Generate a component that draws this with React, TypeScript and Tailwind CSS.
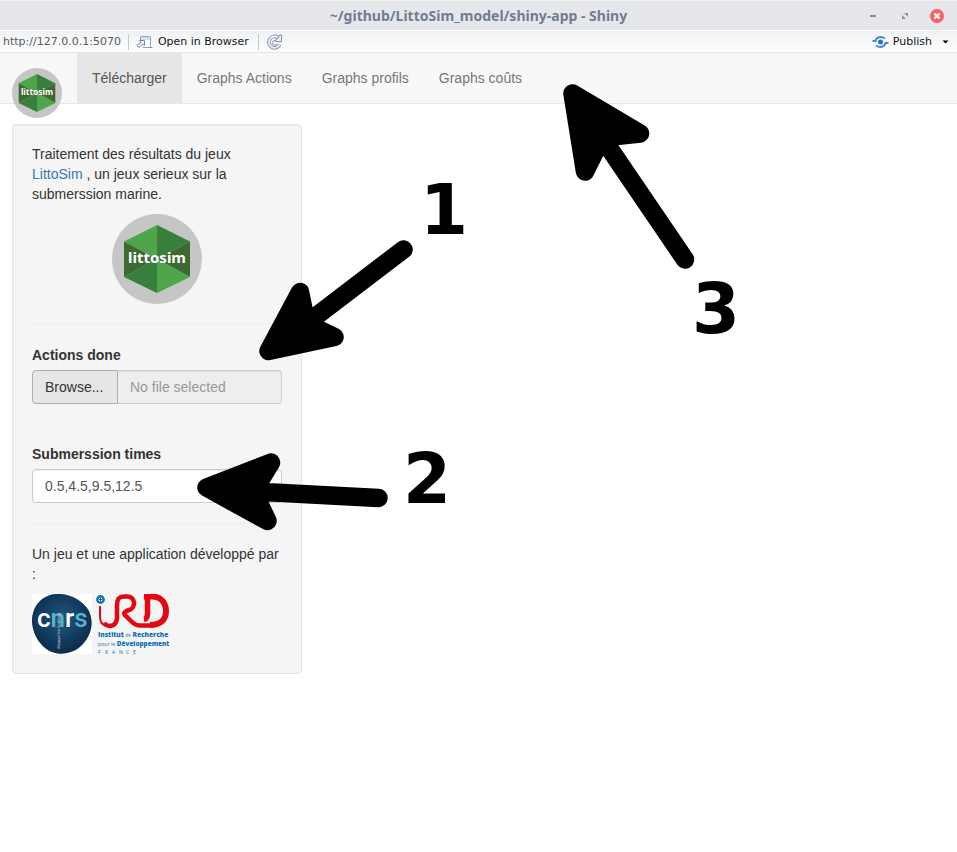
import React from "react";

function LittoSimLogo({ className }: { className: string }) {
  return (
    <svg viewBox="0 0 90 90" className={className} role="img" aria-label="littosim">
      <circle cx="45" cy="45" r="45" fill="#c6c6c6" />
      <path d="M45 45V11L12 27.500Z" fill="#4fa54a" />
      <path d="M45 45V11L78 27.500Z" fill="#387e3c" />
      <path d="M45 45L12 27.500V63Z" fill="#3d6a32" />
      <path d="M45 45L78 27.500V63Z" fill="#3d6a32" />
      <path d="M45 45V79L12 63Z" fill="#387e3c" />
      <path d="M45 45V79L78 63Z" fill="#4fa54a" />
      <text
        x="45"
        y="49"
        textAnchor="middle"
        fill="#fff"
        fontSize="15"
        fontWeight="700"
        fontFamily="'Noto Sans', sans-serif"
      >
        littosim
      </text>
    </svg>
  );
}

function CnrsLogo() {
  return (
    <svg viewBox="0 0 60 60" className="size-15" role="img" aria-label="CNRS">
      <defs>
        <radialGradient id="cnrs-fill" cx="0.5" cy="0.42" r="0.6">
          <stop offset="0" stopColor="#23587f" />
          <stop offset="0.6" stopColor="#123b60" />
          <stop offset="1" stopColor="#0b2a49" />
        </radialGradient>
      </defs>
      <rect width="60" height="60" fill="#fff" />
      <path
        d="M24 0C37-1 51 6 57 17C62 28 60 40 51 50C43 59 30 62 20 58C9 54 0 40 0 27C0 13 9 1 24 0Z"
        fill="url(#cnrs-fill)"
      />
      <text
        x="5"
        y="33"
        fill="#fff"
        fontFamily="Roboto, 'Noto Sans', sans-serif"
        fontSize="26"
        fontWeight="500"
      >
        c<tspan fill="#5bb0d0">n</tspan>r<tspan fill="#5bb0d0">s</tspan>
      </text>
      <text
        transform="translate(28 55) rotate(-90)"
        fill="#d5e2ec"
        fontSize="3.500"
        fontFamily="Roboto, sans-serif"
      >
        dépasser les frontières
      </text>
    </svg>
  );
}

function IrdLogo() {
  return (
    <svg viewBox="0 0 74 60" className="h-15 w-[74px]" role="img" aria-label="IRD">
      <circle cx="4.500" cy="5.500" r="3.200" fill="#fff" stroke="#1470b5" strokeWidth="2.400" />
      <path d="M4.500 3.500V7.500M2.500 5.500H6.500" stroke="#1470b5" strokeWidth="1" />
      <g fill="none" stroke="#e30613">
        <path d="M4 12V22C4 28 6 31 10 31" strokeWidth="2" />
        <path
          d="M8 29C11 33 20 34 21 24V11C21 5 23 2.500 28 2.500H31C40 2.500 40 14 33 16C27 18 27 20 31 23L36 28C38 30 40 31.500 44 31.500H55"
          strokeWidth="4.500"
          strokeLinejoin="round"
        />
        <path d="M48 2.500H56C65 2.500 70 9 70 17C70 25 65 31 54 31" strokeWidth="6" />
        <path d="M51.500 3V19C51.500 23 50.500 25 48 25.500" strokeWidth="5.500" />
      </g>
      <g fill="#1470b5" fontFamily="'Open Sans', 'Noto Sans', sans-serif" fontWeight="800">
        <text x="2" y="43" fontSize="6.600">
          Institut <tspan fontSize="4.500" fontWeight="400">de</tspan> Recherche
        </text>
        <text x="2" y="51.500" fontSize="6.400">
          <tspan fontSize="5.200" fontWeight="400">pour le</tspan> Développement
        </text>
        <g fontSize="5" fontWeight="400">
          <text x="2" y="60">F</text>
          <text x="9" y="60">R</text>
          <text x="16" y="60">A</text>
          <text x="23" y="60">N</text>
          <text x="30" y="60">C</text>
          <text x="37" y="60">E</text>
        </g>
      </g>
    </svg>
  );
}

function TitleBar() {
  return (
    <header className="grid h-[30px] grid-cols-[1fr_auto_1fr] items-center border-t border-[#f0f1f4] bg-[#e6e7eb]">
      <span />
      <h1 className="font-['Noto_Sans',sans-serif] text-sm leading-5 font-bold text-[#737b93]">
        ~/github/LittoSim_model/shiny-app - Shiny
      </h1>
      <div className="flex items-center justify-end gap-[18px] pr-[13px]">
        <button aria-label="Minimize" className="size-3.5">
          <svg viewBox="0 0 14 14">
            <path d="M4 7H10" stroke="#8b909f" strokeWidth="2" />
          </svg>
        </button>
        <button aria-label="Maximize" className="size-3.5">
          <svg viewBox="0 0 14 14" fill="#8b909f">
            <path d="M6 4H10V8ZM4 6V10H8Z" />
          </svg>
        </button>
        <button aria-label="Close" className="size-3.5">
          <svg viewBox="0 0 14 14">
            <circle cx="7" cy="7" r="7" fill="#f9606a" />
            <path d="M4.500 4.500L9.500 9.500M9.500 4.500L4.500 9.500" stroke="#fff" strokeWidth="2.200" />
          </svg>
        </button>
      </div>
    </header>
  );
}

function Toolbar() {
  return (
    <div className="flex h-[23px] items-center border-t border-b border-t-white border-b-[#e4e5ea] bg-linear-to-b from-[#eff1f4] to-[#fdfefd] pl-[3px] font-['DejaVu_Sans',sans-serif] text-[11px] leading-4 text-[#151515]">
      <span className="text-[#5b5b5b]">http://127.0.0.1:5070</span>
      <span className="ml-[7px] h-4 w-px bg-[#c3c8cc]" />
      <button className="ml-[7px] flex items-center gap-1">
        <svg viewBox="0 0 18 14" className="h-3.5 w-[18px]" fill="none">
          <path d="M4.500 5.500V3Q4.500 1.500 6 1.500H13Q14.500 1.500 14.500 3V12.500H7" fill="#fff" stroke="#93a1b6" />
          <path d="M5 2H14V5H5Z" fill="#c9e1f4" />
          <path d="M14 12.500H16.500" stroke="#8794a8" />
          <path d="M3.500 5.500H8.500V10.500L6.800 9L3 12.500L0.800 10.500L5 7.200Z" fill="#f2f4f7" stroke="#7b879b" />
        </svg>
        Open in Browser
      </button>
      <span className="ml-[9px] h-4 w-px bg-[#c3c8cc]" />
      <button aria-label="Reload" className="ml-[7px]">
        <svg viewBox="0 0 18 16" className="h-4 w-[18px]" fill="none">
          <path d="M12 3.500A5.700 5.700 0 1 0 13.800 10.500" stroke="#8791a8" strokeWidth="3.600" />
          <path d="M12 3.500A5.700 5.700 0 1 0 13.800 10.500" stroke="#eef1f5" strokeWidth="1.800" />
          <path d="M15.500 1V7.500H9.500V6L12 4.500L13.500 1Z" fill="#eef1f5" stroke="#8791a8" />
          <path d="M11 9.500A2.300 2.300 0 1 1 9 6.500" stroke="#8791a8" />
        </svg>
      </button>
      <button className="mr-[10px] ml-auto flex items-center gap-1">
        <svg viewBox="0 0 17 12" className="h-3 w-[17px]" fill="none">
          <circle cx="8.500" cy="6" r="2.500" fill="#2a6fd0" />
          <path d="M0.500 5H3.500C4.500 1 9 0 13 2.500" stroke="#4a86d2" strokeWidth="2" />
          <path d="M16.500 7H13.500C12.500 11 8 12 4 9.500" stroke="#4a86d2" strokeWidth="2" />
        </svg>
        Publish
      </button>
      <button aria-label="Publish options" className="mr-2">
        <svg viewBox="0 0 7 4" className="h-1 w-[7px]">
          <path d="M0.500 0.500H6.500L3.500 3.500Z" />
        </svg>
      </button>
    </div>
  );
}

const tabs = ["Télécharger", "Graphs Actions", "Graphs profils", "Graphs coûts"];

function NavBar() {
  return (
    <nav className="flex h-[51px] border-b border-[#e7e7e7] bg-[#f8f8f8] pl-3">
      <a href="#accueil" className="mt-[15px] mr-[15px] h-[50px] shrink-0">
        <LittoSimLogo className="relative size-[50px]" />
      </a>
      {tabs.map((tab, i) => (
        <a
          key={tab}
          href={"#tab-" + i}
          aria-current={i === 0 ? "page" : undefined}
          className={
            i === 0
              ? "bg-[#e7e7e7] px-[15px] py-[15px] text-[#555]"
              : "px-[15px] py-[15px] text-[#777]"
          }
        >
          {tab}
        </a>
      ))}
    </nav>
  );
}

function Sidebar() {
  return (
    <form className="rounded border border-[#e3e3e3] bg-[#f5f5f5] p-[19px] shadow-[inset_0_1px_1px_rgba(0,0,0,0.05)]">
      <p>
        Traitement des résultats du jeux <a href="#littosim" className="text-[#337ab7]">LittoSim</a> , un
        jeux serieux sur la submerssion marine.
      </p>
      <LittoSimLogo className="mx-auto mt-2.5 size-[90px]" />
      <hr className="my-5 border-[#eee]" />
      <label htmlFor="actions" className="block font-bold">
        Actions done
      </label>
      <div className="mt-[5px] flex h-[34px]">
        <button
          type="button"
          className="w-[86px] rounded-l border border-[#adadad] bg-[#e6e6e6] px-3 text-left text-[#333]"
        >
          Browse...
        </button>
        <input
          id="actions"
          readOnly
          placeholder="No file selected"
          className="min-w-0 flex-1 rounded-r border border-l-0 border-[#ccc] bg-[#eee] px-3 shadow-[inset_0_1px_1px_rgba(0,0,0,0.075)] placeholder:text-[#999]"
        />
      </div>
      <label htmlFor="times" className="mt-10 block font-bold">
        Submerssion times
      </label>
      <input
        id="times"
        type="text"
        defaultValue="0.5,4.5,9.5,12.5"
        className="mt-[5px] block h-[34px] w-full rounded border border-[#ccc] bg-white px-3 text-[#555] shadow-[inset_0_1px_1px_rgba(0,0,0,0.075)]"
      />
      <hr className="my-5 border-[#eee]" />
      <p>Un jeu et une application développé par :</p>
      <div className="mt-2.5 flex gap-1">
        <CnrsLogo />
        <IrdLogo />
      </div>
    </form>
  );
}

function Annotations() {
  return (
    <svg
      width="957"
      height="852"
      viewBox="0 0 957 852"
      className="pointer-events-none absolute top-0 left-0 max-w-none"
    >
      <g stroke="#000" strokeWidth="18.500" strokeLinejoin="round" strokeLinecap="round">
        <path d="M403.500 249.500L306.500 323.500L334.500 337L268.500 351L300 292L306.500 323.500" />
        <path d="M378.500 498L253.500 491.500L267.500 521L206.500 487.500L271 462.500L253.500 491.500" />
        <path d="M685 259.500L602 137.500L640 133.500L572.500 93.500L585 171.500L602 137.500" />
      </g>
      <g fontFamily="'DejaVu Sans', sans-serif" fontWeight="700" fontSize="69">
        <text x="420" y="234">1</text>
        <text x="403" y="503">2</text>
        <text x="692" y="333">3</text>
      </g>
    </svg>
  );
}

export default function App() {
  return (
    <div className="relative min-h-screen overflow-hidden bg-white font-['Liberation_Sans',Arial,sans-serif] text-sm leading-5 text-[#333]">
      <TitleBar />
      <Toolbar />
      <NavBar />
      <main className="w-1/3 min-w-[319px] pt-5 pr-[17px] pl-3">
        <Sidebar />
      </main>
      <Annotations />
    </div>
  );
}
